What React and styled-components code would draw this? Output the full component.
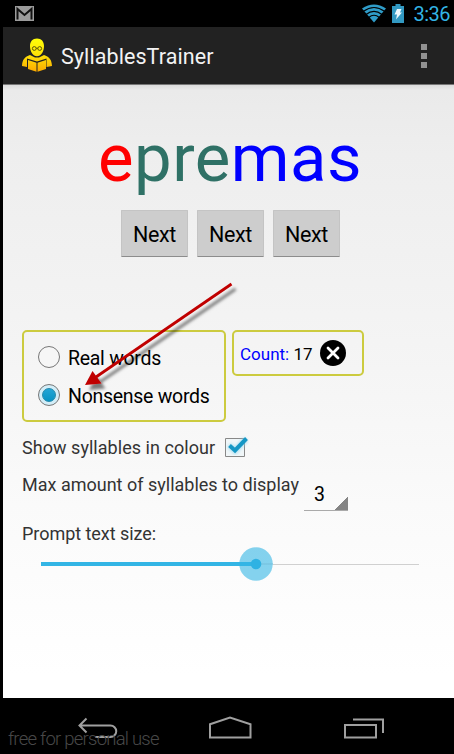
import React from "react";
import styled, { createGlobalStyle } from "styled-components";

const GlobalStyle = createGlobalStyle`
  * { box-sizing: border-box; }
  body { margin: 0; background: #000; font-family: Roboto, sans-serif; overflow: hidden; }
`;

const Screen = styled.div`
  position: relative;
  width: 454px;
  height: 754px;
  display: flex;
  flex-direction: column;
  background: #000;
`;

const Text = styled.span`
  display: block;
  flex: none;
  white-space: pre;
  font-size: ${(p) => p.$size}px;
  font-weight: ${(p) => p.$weight || 400};
  line-height: ${(p) => p.$line || 24}px;
  letter-spacing: ${(p) => p.$spacing || 0}px;
  color: ${(p) => p.$color || "#333"};
`;

const StatusBar = styled.header`
  height: 27px;
  flex: none;
  display: flex;
  align-items: center;
  padding: 0 4px 0 15px;
`;

const StatusIcons = styled.div`
  margin-left: auto;
  display: flex;
  align-items: center;
`;

const BatterySlot = styled.div`
  display: flex;
  margin: 0 9px 0 6px;
`;

const ActionBar = styled.div`
  height: 57px;
  flex: none;
  margin-left: 3px;
  padding: 0 27px 0 19px;
  display: flex;
  align-items: center;
  background: #222;
`;

const Title = styled.h1`
  margin: 3px 0 0 9px;
  font-weight: 400;
  font-size: 21.5px;
  line-height: 30px;
  letter-spacing: 0.08px;
  color: #f3f3f3;
`;

const Overflow = styled.div`
  margin-left: auto;
  display: grid;
  gap: 3px;
`;

const Dot = styled.i`
  width: 6px;
  height: 6px;
  background: #929292;
`;

const Content = styled.main`
  height: 614px;
  flex: none;
  margin-left: 3px;
  padding: 33px 19px 0;
  border-top: 1px solid #777;
  background: linear-gradient(#dcdcdc 0, #eaeaea 5px, #eeeeee 70px, #f3f3f3 230px, #fafafa 420px, #fff 590px);
`;

const Word = styled.div`
  height: 80px;
  padding-left: 76px;
  display: flex;
`;

const ButtonRow = styled.div`
  margin-top: 12px;
  padding-left: 99px;
  display: flex;
  gap: 9px;
`;

const NextButton = styled.button`
  width: 67px;
  height: 47px;
  padding: 1px 0 0;
  border: 1px solid #c4c4c4;
  border-bottom-color: #8c8c8c;
  border-radius: 1px;
  background: #cdcdcd;
  font: 400 21.5px/45px Roboto, sans-serif;
  letter-spacing: -0.4px;
  color: #000;
`;

const Panels = styled.div`
  margin-top: 73px;
  display: flex;
  align-items: flex-start;
  gap: 6px;
`;

const Panel = styled.section`
  width: ${(p) => p.$width}px;
  height: ${(p) => p.$height}px;
  border: 2px solid #cccb3f;
  border-radius: 5px;
`;

const RadioPanel = styled(Panel)`
  padding: 6px 0 0 14px;
`;

const CountPanel = styled(Panel)`
  display: flex;
  align-items: center;
  padding-left: 6px;
`;

const CountText = styled.div`
  display: flex;
  padding-top: 2px;
`;

const RadioRow = styled.label`
  height: 38px;
  display: flex;
  align-items: center;
  gap: 8px;
`;

const RadioText = styled.span`
  padding-top: 3px;
  font-size: 19.5px;
  line-height: 24px;
  letter-spacing: -0.28px;
  color: #000;
`;

const RadioRing = styled.i`
  width: 22px;
  height: 22px;
  display: grid;
  place-items: center;
  border: 1px solid #777;
  border-radius: 50%;
  background: ${(p) => (p.$checked ? "#d3edf7" : "#f6f6f6")};
`;

const RadioDot = styled.i`
  width: 14px;
  height: 14px;
  border-radius: 50%;
  background: linear-gradient(#22a5d6, #0793c4);
  border: 1px solid #2388ab;
`;

const ClearSlot = styled.div`
  display: flex;
  margin-left: 7.5px;
`;

const CheckRow = styled.label`
  height: 30px;
  margin-top: 10px;
  display: flex;
  align-items: center;
`;

const CheckText = styled.span`
  padding-top: 2px;
  font-size: 18px;
  line-height: 24px;
  letter-spacing: 0.04px;
  color: #333;
`;

const CheckSlot = styled.div`
  display: flex;
  margin-left: 7px;
`;

const SpinnerRow = styled.div`
  height: 38px;
  margin-top: 11px;
  display: flex;
  align-items: flex-start;
`;

const Spinner = styled.div`
  width: 44px;
  height: 38px;
  margin-left: 5px;
  padding: 10px 0 0 10px;
  border-bottom: 1px solid #aaa;
  background: linear-gradient(135deg, transparent 50%, #848484 51%) right bottom / 14px 14px no-repeat;
`;

const SliderBlock = styled.div`
  margin-top: 11px;
`;

const Slider = styled.div`
  height: 34px;
  margin: 1px 0 0 19px;
  width: 378px;
  display: flex;
  align-items: center;
`;

const Filled = styled.div`
  width: 198px;
  height: 4px;
  background: #33b5e5;
`;

const Thumb = styled.div`
  width: 34px;
  height: 34px;
  flex: none;
  display: flex;
`;

const Remaining = styled.div`
  flex: 1;
  height: 1px;
  background: #d0d0d0;
`;

const NavBar = styled.nav`
  flex: 1;
  display: flex;
`;

const Watermark = styled.div`
  position: absolute;
  left: 8px;
  top: 727px;
`;

const ArrowOverlay = styled.svg`
  position: absolute;
  left: 75px;
  top: 275px;
  pointer-events: none;
`;

const MailIcon = () => (
  <svg width="19" height="15" viewBox="0 0 19 15">
    <path d="M0 0h19v15H0z" fill="#9c9c9c" />
    <path d="M2.500 13.500V3l7 6 7-6v10.500" fill="none" stroke="#111" strokeWidth="2" />
  </svg>
);

const WifiIcon = () => (
  <svg width="24" height="19" viewBox="0 0 24 19">
    <path d="M0 4.500Q12-3.700 24 4.500L12 18.500z" fill="#2f9cc8" />
    <path d="M1.500 7.300Q12-.300 22.500 7.300M4 10.500Q12 4.200 20 10.500M6.700 13.500Q12 9 17.300 13.500" fill="none" stroke="#000" strokeWidth="1.200" />
  </svg>
);

const BatteryIcon = () => (
  <svg width="12" height="19" viewBox="0 0 12 19">
    <path d="M0 2h3.500V0h5v2H12v17H0z" fill="#3299c2" />
    <path d="M5 5h4.500L8 8.500h2l-6 7 1-5H2.500z" fill="#eefaff" />
  </svg>
);

const ReaderIcon = () => (
  <svg width="30" height="35" viewBox="0 0 30 35">
    <defs>
      <linearGradient id="reader" x1="0" y1="0" x2="0" y2="1">
        <stop offset="0" stopColor="#ffff08" />
        <stop offset=".5" stopColor="#ffe208" />
        <stop offset="1" stopColor="#fba900" />
      </linearGradient>
    </defs>
    <path
      d="M15 .500c-4.500 0-7 3-7 7.500 0 5.500 3 10.200 7 10.200s7-4.700 7-10.200C22 3.500 19.500.500 15 .500zM8 17C3 18.500.3 21.500 0 28l5 1v-8.500l10 3 9.500-3V29l5.500-1c-.3-6.500-3-9.500-8-11l-5 2.500h-4zM6 22l8.500 2.800v9L6 31zM15.500 24.800L24 22v9l-8.500 2.800z"
      fill="url(#reader)"
    />
    <g fill="none" stroke="#5a540a">
      <circle cx="12.300" cy="10.500" r="1.900" />
      <circle cx="17.700" cy="10.500" r="1.900" />
      <path d="M14.200 10.300h1.600" />
    </g>
  </svg>
);

const ClearIcon = () => (
  <svg width="26" height="26" viewBox="0 0 26 26">
    <circle cx="13" cy="13" r="13" fill="#000" />
    <path d="M8 8l10 10M18 8L8 18" stroke="#fff" strokeWidth="2.800" strokeLinecap="round" />
  </svg>
);

const CheckIcon = () => (
  <svg width="27" height="26" viewBox="0 0 27 26">
    <defs>
      <filter id="checkGlow" x="-30%" y="-30%" width="160%" height="160%">
        <feGaussianBlur stdDeviation="1.500" />
      </filter>
    </defs>
    <path d="M3.500 4.500h19v18h-19z" fill="#f0f6f8" stroke="#888" />
    <path d="M7 11l6 6L24 5" fill="none" stroke="#93d7ef" strokeWidth="6" opacity=".65" filter="url(#checkGlow)" />
    <path d="M7.500 11.500l5.500 5L24.500 4.500" fill="none" stroke="#1597c5" strokeWidth="4" />
  </svg>
);

const ThumbIcon = () => (
  <svg width="34" height="34" viewBox="0 0 34 34">
    <circle cx="17" cy="17" r="16.700" fill="#33b5e5" opacity=".6" />
    <path d="M0 15h17v4H0z" fill="#33b5e5" />
    <path d="M20 17h14" stroke="#75bfdb" />
    <circle cx="17" cy="17" r="5.300" fill="#2fb2e3" />
  </svg>
);

const NavIcons = () => (
  <svg width="454" height="56" viewBox="0 698 454 56" fill="none" stroke="#a0a0a0" strokeWidth="2">
    <path d="M86.500 718.500l-7 7 7 7M80 725.500h30.500a5.700 5.700 0 0 1 0 11.500H95" />
    <path d="M210 724.300l20-6.800 20.500 6.800V737.500H210z" />
    <path d="M345 725h31v12.500h-31zM353 719.500h30V733" />
  </svg>
);

export default function App() {
  return (
    <>
      <GlobalStyle />
      <Screen>
        <StatusBar>
          <MailIcon />
          <StatusIcons>
            <WifiIcon />
            <BatterySlot><BatteryIcon /></BatterySlot>
            <Text $size={20} $spacing={-0.5} $color="#33b5e5">3:36</Text>
          </StatusIcons>
        </StatusBar>
        <ActionBar>
          <ReaderIcon />
          <Title>SyllablesTrainer</Title>
          <Overflow><Dot /><Dot /><Dot /></Overflow>
        </ActionBar>
        <Content>
          <Word>
            <Text $size={67} $line={80} $spacing={0.5} $color="#f00">e</Text>
            <Text $size={67} $line={80} $spacing={0.5} $color="#2f7166">pre</Text>
            <Text $size={67} $line={80} $spacing={0.5} $color="#00f">mas</Text>
          </Word>
          <ButtonRow>
            <NextButton>Next</NextButton>
            <NextButton>Next</NextButton>
            <NextButton>Next</NextButton>
          </ButtonRow>
          <Panels>
            <RadioPanel $width={204} $height={92}>
              <RadioRow>
                <RadioRing />
                <RadioText>Real words</RadioText>
              </RadioRow>
              <RadioRow>
                <RadioRing $checked><RadioDot /></RadioRing>
                <RadioText>Nonsense words</RadioText>
              </RadioRow>
            </RadioPanel>
            <CountPanel $width={132} $height={46}>
              <CountText>
                <Text $size={17} $color="#00f">Count: </Text>
                <Text $size={17} $color="#000">17</Text>
              </CountText>
              <ClearSlot><ClearIcon /></ClearSlot>
            </CountPanel>
          </Panels>
          <CheckRow>
            <CheckText>Show syllables in colour</CheckText>
            <CheckSlot><CheckIcon /></CheckSlot>
          </CheckRow>
          <SpinnerRow>
            <Text $size={18}>Max amount of syllables to display</Text>
            <Spinner><Text $size={19.5} $color="#000">3</Text></Spinner>
          </SpinnerRow>
          <SliderBlock>
            <Text $size={18} $spacing={-0.05}>Prompt text size:</Text>
            <Slider>
              <Filled />
              <Thumb><ThumbIcon /></Thumb>
              <Remaining />
            </Slider>
          </SliderBlock>
        </Content>
        <NavBar><NavIcons /></NavBar>
        <Watermark><Text $size={18.5} $weight={300} $spacing={-0.76} $color="#484848">free for personal use</Text></Watermark>
        <ArrowOverlay width="170" height="120" viewBox="75 275 170 120">
          <defs>
            <filter id="arrowShadow" x="-10%" y="-10%" width="120%" height="130%">
              <feDropShadow dx="4" dy="5" stdDeviation="1.800" floodColor="#000" floodOpacity=".5" />
            </filter>
          </defs>
          <g filter="url(#arrowShadow)">
            <path d="M231.500 284L96 377" stroke="#c00000" strokeWidth="2.800" />
            <path d="M85 385l7.500-14 9 12.500z" fill="#c00000" />
          </g>
        </ArrowOverlay>
      </Screen>
    </>
  );
}
